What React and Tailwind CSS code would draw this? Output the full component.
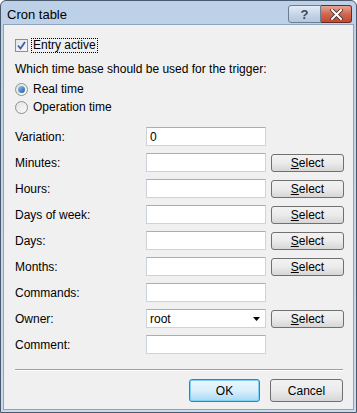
import React from 'react';

const font = { fontFamily: '"Liberation Sans", Arial, sans-serif' };

function SelectButton() {
  return (
    <button className="h-[18px] w-[73px] rounded-[3px] border border-[#707070] bg-gradient-to-b from-[#f2f2f2] via-[#ebebeb] to-[#d6d6d6] text-[12px] leading-none text-black">
      <span className="underline">S</span>elect
    </button>
  );
}

function Field({ value }) {
  return (
    <div className="flex h-[19px] w-[120px] items-center border border-[#cdd3da] border-t-[#abadb3] bg-white px-[3px] text-[12px] text-black">
      {value}
    </div>
  );
}

const rows = [
  { label: 'Variation:', value: '0' },
  { label: 'Minutes:', select: true },
  { label: 'Hours:', select: true },
  { label: 'Days of week:', select: true },
  { label: 'Days:', select: true },
  { label: 'Months:', select: true },
  { label: 'Commands:' },
  { label: 'Owner:', combo: true, select: true },
  { label: 'Comment:' },
];

export default function App() {
  return (
    <div
      className="flex h-[413px] w-[357px] flex-col rounded-t-[6px] border border-[#4a5a6e] bg-gradient-to-b from-[#bcd1e8] to-[#c9dbee]"
      style={font}
    >
      {/* Title bar */}
      <div className="flex h-[23px] shrink-0 items-start justify-between pl-[6px] pr-[4px]">
        <span className="mt-[7px] text-[13px] leading-none text-black">Cron table</span>
        <div className="mt-[4px] flex">
          <div className="flex h-[18px] w-[33px] items-center justify-center rounded-l-[3px] border border-[#6d7d91] bg-gradient-to-b from-[#e3ecf6] via-[#c7d6e8] to-[#b3c7de] text-[13px] font-bold leading-none text-[#39495c]">
            ?
          </div>
          <div className="flex h-[18px] w-[31px] items-center justify-center rounded-r-[3px] border border-l-0 border-[#6a2a20] bg-gradient-to-b from-[#e8a493] via-[#d0674f] to-[#c04a30]">
            <svg width="13" height="11" viewBox="0 0 13 11">
              <path d="M2 1 L11 10 M11 1 L2 10" stroke="#3a2a2a" strokeWidth="3.6" strokeLinecap="square" />
              <path d="M2 1 L11 10 M11 1 L2 10" stroke="#ffffff" strokeWidth="2" strokeLinecap="square" />
            </svg>
          </div>
        </div>
      </div>

      {/* Client area */}
      <div className="mx-[2px] mb-[2px] flex flex-1 flex-col border border-[#8ea4bd] bg-[#f0f0f0] pl-[11px] text-[12px] text-black">
        {/* Checkbox */}
        <div className="mt-[14px] flex h-[13px] items-center">
          <div className="flex h-[13px] w-[13px] items-center justify-center border border-[#8e8f8f] bg-gradient-to-br from-[#e6e6e6] to-[#f7f7f7]">
            <svg width="9" height="9" viewBox="0 0 9 9">
              <path d="M1 4.5 L3.5 7.5 L8 1" stroke="#3d5bb0" strokeWidth="1.8" fill="none" />
            </svg>
          </div>
          <span className="ml-[3px] border border-dotted border-black px-[1px] leading-[13px]">Entry active</span>
        </div>

        <div className="mt-[10px] leading-[14px]">Which time base should be used for the trigger:</div>

        <div className="mt-[6px] flex h-[14px] items-center">
          <div className="flex h-[13px] w-[13px] items-center justify-center rounded-full border border-[#8e8f8f] bg-gradient-to-br from-[#e2e2e2] to-[#fbfbfb]">
            <div className="h-[7px] w-[7px] rounded-full bg-gradient-to-br from-[#8ec5ec] to-[#1c5ea0]" />
          </div>
          <span className="ml-[5px]">Real time</span>
        </div>
        <div className="mt-[4px] flex h-[14px] items-center">
          <div className="h-[13px] w-[13px] rounded-full border border-[#8e8f8f] bg-gradient-to-br from-[#e2e2e2] to-[#fbfbfb]" />
          <span className="ml-[5px]">Operation time</span>
        </div>

        {/* Fields */}
        <div className="mt-[13px] flex flex-col gap-[7px]">
          {rows.map((r) => (
            <div key={r.label} className="flex h-[19px] items-center">
              <span className="w-[131px]">{r.label}</span>
              {r.combo ? (
                <div className="flex h-[19px] w-[120px] items-center justify-between border border-[#cdd3da] border-t-[#abadb3] bg-white pl-[3px] pr-[5px]">
                  <span>root</span>
                  <svg width="7" height="4" viewBox="0 0 7 4">
                    <path d="M0 0 H7 L3.5 4 Z" fill="#000" />
                  </svg>
                </div>
              ) : (
                <Field value={r.value} />
              )}
              {r.select && (
                <div className="ml-[5px]">
                  <SelectButton />
                </div>
              )}
            </div>
          ))}
        </div>

        {/* Separator */}
        <div className="mr-[10px] mt-[15px] h-[2px] border-t border-b border-t-[#a0a0a0] border-b-white" />

        <div className="mr-[10px] mt-[8px] flex justify-end gap-[10px]">
          <button className="h-[23px] w-[71px] rounded-[3px] border border-[#3c7fb1] bg-gradient-to-b from-[#eaf6fd] via-[#d9f0fc] to-[#a7d9f5] text-[12px] shadow-[inset_0_0_0_1px_#7fd1f7]">
            OK
          </button>
          <button className="h-[23px] w-[73px] rounded-[3px] border border-[#707070] bg-gradient-to-b from-[#f2f2f2] via-[#ebebeb] to-[#d6d6d6] text-[12px]">
            Cancel
          </button>
        </div>
      </div>
    </div>
  );
}
